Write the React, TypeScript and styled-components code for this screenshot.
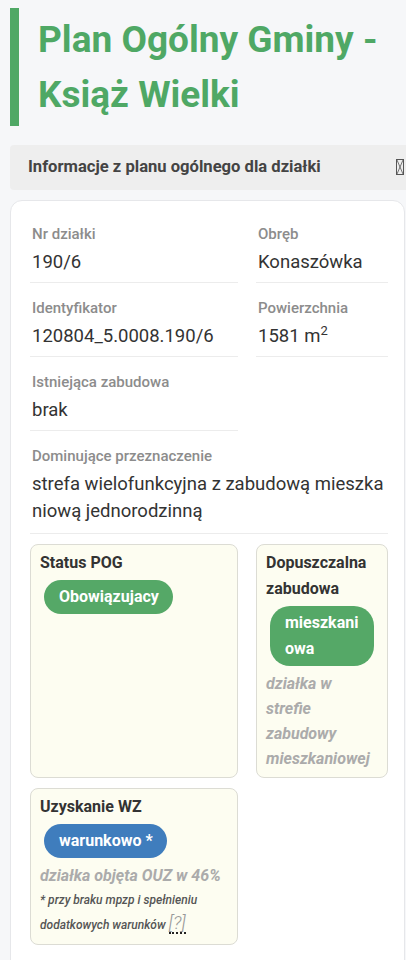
import React from "react";
import styled, { createGlobalStyle } from "styled-components";

const Global = createGlobalStyle`
  html, body { margin: 0; padding: 0; background: #f6f7f9; }
  body { font-family: Roboto, "Noto Sans", "Liberation Sans", sans-serif; overflow: hidden; }
`;

const Page = styled.div`
  width: 406px;
  height: 960px;
  overflow: hidden;
  box-sizing: border-box;
  padding: 8px 0 0 10px;
`;

const Title = styled.h1`
  margin: 0;
  border-left: 9px solid #4fa865;
  padding: 4px 0 4px 19px;
  font-size: 37px;
  line-height: 55px;
  font-weight: 700;
  color: #4fa865;
`;

const SectionBar = styled.div`
  margin: 19px -10px 0 0;
  background: #eeeeee;
  border-radius: 4px;
  display: flex;
  align-items: center;
  justify-content: space-between;
  padding: 10px 12px 11px 18px;
  font-size: 16.6px;
  line-height: 24px;
  font-weight: 700;
  color: #444;
`;

const Tofu = styled.svg`
  width: 8px;
  height: 16px;
  flex: none;
`;

const Card = styled.div`
  margin-top: 10px;
  width: 395px;
  box-sizing: border-box;
  background: #fff;
  border: 1px solid #e6e7ea;
  border-radius: 12px;
  padding: 22px 16px 30px 19px;
`;

const InfoGrid = styled.div`
  display: grid;
  grid-template-columns: 208px 132px;
  column-gap: 18px;
  row-gap: 14px;
`;

const Field = styled.div<{ $wide?: boolean }>`
  padding: 0 2px ${(p) => (p.$wide ? "8px" : "6px")};
  border-bottom: 1px solid #ececec;
  grid-column: ${(p) => (p.$wide ? "1 / -1" : "auto")};
`;

const Label = styled.div`
  font-size: 15px;
  font-weight: 500;
  color: #8c8c8c;
  line-height: 22px;
  margin-bottom: 4px;
`;

const Value = styled.div`
  font-size: 18.5px;
  color: #333;
  line-height: 27px;
  word-break: break-all;
  sup { font-size: 13px; line-height: 0; }
`;

const SubGrid = styled.div`
  margin-top: 10px;
  display: grid;
  grid-template-columns: 208px 132px;
  column-gap: 18px;
  row-gap: 10px;
`;

const SubCard = styled.div`
  background: #fdfdf1;
  border: 1px solid #dcdcd4;
  border-radius: 8px;
  padding: 5px 9px 6px;
  min-width: 0;
`;

const SubTitle = styled.div`
  font-size: 16px;
  font-weight: 700;
  color: #333;
  line-height: 26px;
`;

const Badge = styled.div<{ $color: string }>`
  display: block;
  width: fit-content;
  max-width: calc(100% - 8px);
  box-sizing: border-box;
  margin: 4px 4px 5px;
  padding: 4px 14px 4px 15px;
  border-radius: 20px;
  background: ${(p) => p.$color};
  color: #fff;
  font-size: 16px;
  font-weight: 700;
  line-height: 26px;
  word-break: break-all;
`;

const Hint = styled.div`
  font-size: 16px;
  font-style: italic;
  font-weight: 700;
  color: #ababab;
  line-height: 25px;
`;

const Note = styled.div`
  font-size: 12px;
  font-style: italic;
  font-weight: 500;
  color: #555;
  line-height: 25px;
`;

const Help = styled.span`
  display: inline-block;
  font-size: 19px;
  font-weight: 300;
  color: #999;
  line-height: 19px;
  border-bottom: 2px dotted #222;
  cursor: help;
`;

export default function App() {
  return (
    <>
      <Global />
      <Page>
        <Title>Plan Ogólny Gminy - Książ Wielki</Title>
        <SectionBar>
          <span>Informacje z planu ogólnego dla działki</span>
          <Tofu viewBox="0 0 8 16" aria-hidden>
            <rect x="0.5" y="0.5" width="7" height="15" fill="none" stroke="#555" strokeWidth="1" />
            <path d="M1 1 L7 15 M7 1 L1 15" stroke="#555" strokeWidth="0.8" fill="none" />
          </Tofu>
        </SectionBar>
        <Card>
          <InfoGrid>
            <Field>
              <Label>Nr działki</Label>
              <Value>190/6</Value>
            </Field>
            <Field>
              <Label>Obręb</Label>
              <Value>Konaszówka</Value>
            </Field>
            <Field>
              <Label>Identyfikator</Label>
              <Value>120804_5.0008.190/6</Value>
            </Field>
            <Field>
              <Label>Powierzchnia</Label>
              <Value>
                1581 m<sup>2</sup>
              </Value>
            </Field>
            <Field>
              <Label>Istniejąca zabudowa</Label>
              <Value>brak</Value>
            </Field>
            <div />
            <Field $wide>
              <Label>Dominujące przeznaczenie</Label>
              <Value>strefa wielofunkcyjna z zabudową mieszkaniową jednorodzinną</Value>
            </Field>
          </InfoGrid>
          <SubGrid>
            <SubCard>
              <SubTitle>Status POG</SubTitle>
              <Badge $color="#55a867">Obowiązujacy</Badge>
            </SubCard>
            <SubCard>
              <SubTitle>Dopuszczalna zabudowa</SubTitle>
              <Badge $color="#55a867">mieszkaniowa</Badge>
              <Hint>działka w strefie zabudowy mieszkaniowej</Hint>
            </SubCard>
            <SubCard>
              <SubTitle>Uzyskanie WZ</SubTitle>
              <Badge $color="#3f7dbd">warunkowo *</Badge>
              <Hint>działka objęta OUZ w 46%</Hint>
              <Note>
                * przy braku mpzp i spełnieniu dodatkowych warunków{" "}
                <Help title="Wyjaśnienie">[?]</Help>
              </Note>
            </SubCard>
          </SubGrid>
        </Card>
      </Page>
    </>
  );
}
